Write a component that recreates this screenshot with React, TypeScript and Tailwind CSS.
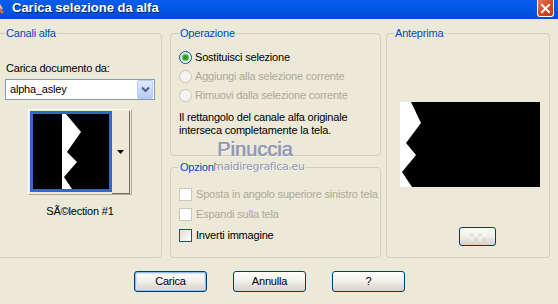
import React from 'react';

const Radio = ({ checked, disabled }: { checked?: boolean; disabled?: boolean }) => (
  <span
    className={`flex h-[13px] w-[13px] shrink-0 items-center justify-center rounded-full border ${
      disabled ? 'border-[#CAC8BB] bg-[#F4F3EE]' : 'border-[#1C5180] bg-gradient-to-br from-[#DCDCD7] to-white'
    }`}
  >
    {checked && <span className="h-[5px] w-[5px] rounded-full bg-[#21A121] shadow-[0_0_1px_1px_#55C455]" />}
  </span>
);

const Check = ({ disabled }: { disabled?: boolean }) => (
  <span
    className={`h-[13px] w-[13px] shrink-0 border ${
      disabled ? 'border-[#CAC8BB] bg-white' : 'border-[#1C5180] bg-gradient-to-br from-[#DCDCD7] to-white'
    }`}
  />
);

const Button = ({ label, primary }: { label: string; primary?: boolean }) => (
  <button
    className={`flex h-[21px] w-[73px] items-center justify-center rounded-[3px] border border-[#003C74] bg-gradient-to-b from-white via-[#F1EFE8] to-[#D6D0C5] text-[11px] text-black ${
      primary ? 'shadow-[inset_0_0_0_1px_#98B8EA,inset_0_0_0_2px_#CEE7FF]' : ''
    }`}
  >
    {label}
  </button>
);

export default function App() {
  return (
    <div className="relative flex h-[304px] w-[558px] flex-col overflow-hidden bg-[#ECE9D8] font-['Liberation_Sans',Arial,sans-serif] text-[11px] tracking-[-0.2px] text-black">
      {/* title bar */}
      <div className="flex h-[19px] items-center bg-gradient-to-b from-[#0A5CEA] via-[#0056E2] to-[#0049D4]">
        <svg className="-ml-[11px] mb-[4px] h-[15px] w-[16px]" viewBox="0 0 16 15">
          <path d="M2 2 L14 13" stroke="#E0683A" strokeWidth="3" />
          <path d="M8 1 L13 9" stroke="#F5C6A0" strokeWidth="2" />
        </svg>
        <span className="ml-[7px] mb-[3px] text-[13px] font-bold tracking-normal text-white [text-shadow:1px_1px_0_#0A246A]">
          Carica selezione da alfa
        </span>
        <div className="ml-auto mr-[4px] mb-[2px] flex h-[17px] w-[17px] items-center justify-center rounded-b-[3px] border border-t-0 border-white bg-gradient-to-br from-[#E8795A] via-[#D8461F] to-[#C23A17]">
          <svg width="11" height="11" viewBox="0 0 11 11">
            <path d="M2 2 L9 9 M9 2 L2 9" stroke="white" strokeWidth="2" strokeLinecap="square" />
          </svg>
        </div>
      </div>

      {/* body */}
      <div className="flex pt-[8px]">
        {/* Canali alfa */}
        <fieldset className="-ml-[4px] h-[231px] w-[166px] rounded-[4px] border border-[#D0D0BF]">
          <legend className="ml-[8px] px-[1px] leading-[13px] text-[#0046D5]">Canali alfa</legend>
          <div className="flex flex-col pl-[8px]">
            <span className="mt-[22px] pl-[1px] leading-[13px]">Carica documento da:</span>
            <div className="mt-[4px] flex h-[21px] w-[150px] items-center border border-[#7F9DB9] bg-white">
              <span className="pl-[4px]">alpha_asley</span>
              <div className="ml-auto mr-[1px] flex h-[19px] w-[16px] items-center justify-center rounded-[2px] border border-[#B9CCF3] bg-gradient-to-b from-[#E2EBFD] to-[#B7CAF5]">
                <svg width="9" height="7" viewBox="0 0 9 7">
                  <path d="M1 1.5 L4.5 5 L8 1.5" stroke="#4D6185" strokeWidth="2" fill="none" />
                </svg>
              </div>
            </div>
            <div className="mt-[9px] flex w-[150px] justify-center">
              <div className="flex h-[86px] border border-[#FCFCFA] border-r-[#ACA899] border-b-[#ACA899] p-[1px]">
                <div className="h-[81px] w-[82px] border-[3px] border-[#316AC5] bg-black">
                  <svg width="76" height="75" viewBox="0 0 76 75">
                    <polygon points="29,0 33,0 48,18 34,38 44,48 31,63 39,75 29,75" fill="white" />
                  </svg>
                </div>
                <div className="flex h-[83px] w-[18px] items-center justify-center border-r border-b border-[#716F64] border-l-white">
                  <svg width="7" height="4" viewBox="0 0 7 4">
                    <polygon points="0,0 7,0 3.5,4" fill="black" />
                  </svg>
                </div>
              </div>
            </div>
            <span className="mt-[10px] w-[150px] text-center leading-[13px]">SÃ©lection #1</span>
          </div>
        </fieldset>

        {/* middle column */}
        <div className="ml-[8px] flex w-[211px] flex-col gap-[5px]">
          <fieldset className="h-[129px] rounded-[4px] border border-[#D0D0BF]">
            <legend className="ml-[8px] px-[1px] leading-[13px] text-[#0046D5]">Operazione</legend>
            <div className="mt-[11px] flex flex-col gap-[6px] pl-[8px]">
              <label className="flex h-[13px] items-center gap-[3px]">
                <Radio checked />
                <span>Sostituisci selezione</span>
              </label>
              <label className="flex h-[13px] items-center gap-[3px] text-[#ACA899]">
                <Radio disabled />
                <span>Aggiungi alla selezione corrente</span>
              </label>
              <label className="flex h-[13px] items-center gap-[3px] text-[#ACA899]">
                <Radio disabled />
                <span>Rimuovi dalla selezione corrente</span>
              </label>
            </div>
            <p className="mt-[9px] pl-[8px] leading-[13px]">
              Il rettangolo del canale alfa originale
              <br />
              interseca completamente la tela.
            </p>
          </fieldset>

          <fieldset className="h-[97px] rounded-[4px] border border-[#D0D0BF]">
            <legend className="ml-[8px] px-[1px] leading-[13px] text-[#0046D5]">Opzioni</legend>
            <div className="mt-[14px] flex flex-col gap-[7px] pl-[8px]">
              <label className="flex h-[13px] items-center gap-[4px] text-[#ACA899]">
                <Check disabled />
                <span>Sposta in angolo superiore sinistro tela</span>
              </label>
              <label className="flex h-[13px] items-center gap-[4px] text-[#ACA899]">
                <Check disabled />
                <span>Espandi sulla tela</span>
              </label>
              <label className="mt-[1px] flex h-[13px] items-center gap-[4px]">
                <Check />
                <span>Inverti immagine</span>
              </label>
            </div>
          </fieldset>
        </div>

        {/* Anteprima */}
        <fieldset className="ml-[5px] h-[231px] w-[164px] rounded-[4px] border border-[#D0D0BF]">
          <legend className="ml-[7px] px-[1px] leading-[13px] text-[#0046D5]">Anteprima</legend>
          <div className="flex flex-col">
            <div className="ml-[13px] mt-[62px] h-[85px] w-[140px] bg-black">
              <svg width="140" height="85" viewBox="0 0 140 85">
                <polygon points="0,0 11,0 21,21 6,41 16,53 2,70 12,85 0,85" fill="white" />
              </svg>
            </div>
            <div className="ml-[72px] mt-[40px] flex h-[19px] w-[37px] items-center justify-center rounded-[3px] border border-[#003C74] bg-gradient-to-b from-white via-[#F1EFE8] to-[#D6D0C5]">
              <div className="grid h-[8px] w-[16px] grid-cols-4 opacity-40">
                <span className="bg-[#D0D0D0]" />
                <span className="bg-white" />
                <span className="bg-[#D0D0D0]" />
                <span className="bg-white" />
                <span className="bg-white" />
                <span className="bg-[#D0D0D0]" />
                <span className="bg-white" />
                <span className="bg-[#D0D0D0]" />
              </div>
            </div>
          </div>
        </fieldset>
      </div>

      {/* buttons */}
      <div className="mt-[13px] flex gap-[26px] pl-[134px]">
        <Button label="Carica" primary />
        <Button label="Annulla" />
        <Button label="?" />
      </div>

      {/* watermark */}
      <span className="pointer-events-none absolute left-[217px] top-[138px] text-[20px] leading-[23px] tracking-[0px] text-[#9598B2] [text-shadow:0.6px_0_0_#9598B2,1px_1px_0_#F6F6F8]">
        Pinuccia
      </span>
      <span className="pointer-events-none absolute left-[213px] top-[161px] font-['DejaVu_Sans',sans-serif] text-[11px] leading-[12px] tracking-[-0.3px] text-[#9598B2] [text-shadow:1px_1px_0_#F6F6F8]">
        maidiregrafica.eu
      </span>
    </div>
  );
}
